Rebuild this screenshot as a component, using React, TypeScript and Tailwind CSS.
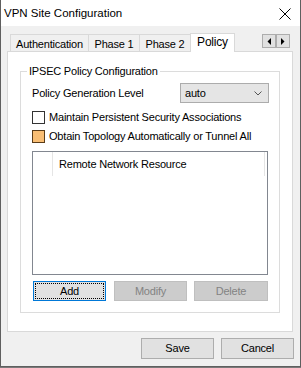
import React from "react";

const font = { fontFamily: '"Liberation Sans", Arial, sans-serif' };

function Tab({ label, selected, w, first }: { label: string; selected?: boolean; w: string; first?: boolean }) {
  if (selected) {
    return (
      <div className={`relative z-10 -mb-px -ml-px flex h-[19px] ${w} items-start justify-center border border-b-0 border-[#d9d9d9] bg-white pt-[1px] text-[12px] leading-[15px] tracking-[-0.2px] text-black`}>
        {label}
      </div>
    );
  }
  return (
    <div className={`${first ? "" : "-ml-px"} flex h-[17px] ${w} items-start justify-center border border-b-0 border-[#d9d9d9] bg-[#f0f0f0] pt-[2px] text-[11px] leading-[14px] text-black`}>
      {label}
    </div>
  );
}

function Arrow({ dir }: { dir: "l" | "r" }) {
  return (
    <div className="flex h-[14px] w-[14px] items-center justify-center border border-[#adadad] bg-[#e1e1e1]">
      <svg width="4" height="7" viewBox="0 0 4 7">
        {dir === "l" ? <polygon points="4,0 4,7 0.5,3.5" fill="#000" /> : <polygon points="0,0 0,7 3.5,3.5" fill="#000" />}
      </svg>
    </div>
  );
}

export default function App() {
  return (
    <div className="h-[368px] w-[301px] bg-[#7a7a7a]" style={font}>
      <div className="flex h-[367px] w-[301px] flex-col border-x border-b border-[#5f5f5f] bg-[#f0f0f0] text-[11px] tracking-[-0.2px] text-black">
        {/* Title bar */}
        <div className="flex h-[26px] shrink-0 items-center justify-between bg-white pl-[3px] pr-[9px] pt-[1px]">
          <span className="text-[11.5px] leading-none tracking-normal">VPN Site Configuration</span>
          <svg width="12" height="12" viewBox="0 0 12 12">
            <path d="M0.5 0.5 L11.5 11.5 M11.5 0.5 L0.5 11.5" stroke="#000" strokeWidth="1" />
          </svg>
        </div>

        {/* Tab strip */}
        <div className="mt-[7px] flex h-[18px] items-end pl-[9px] pr-[10px]">
          <Tab label="Authentication" w="w-[79px]" first />
          <Tab label="Phase 1" w="w-[52px]" />
          <Tab label="Phase 2" w="w-[52px]" />
          <Tab label="Policy" w="w-[45px]" selected />
          <div className="mb-[3px] ml-auto flex self-end">
            <Arrow dir="l" />
            <Arrow dir="r" />
          </div>
        </div>

        {/* Tab page */}
        <div className="ml-[6px] h-[281px] w-[286px] border border-[#d9d9d9] bg-white pl-[12px] pt-[19px]">
          {/* Group box */}
          <div className="relative h-[242px] w-[260px] border border-[#dcdcdc] pl-[11px] pr-[10px] pt-[11px]">
            <div className="absolute -top-[8px] left-[6px] bg-white px-[2px] text-[11px] leading-[14px]">
              IPSEC Policy Configuration
            </div>
            <div className="flex h-[20px] items-center justify-between">
              <span className="leading-none">Policy Generation Level</span>
              <div className="flex h-[20px] w-[89px] items-center justify-between border border-[#acacac] bg-[#e5e5e5] pl-[4px] pr-[6px]">
                <span className="leading-none">auto</span>
                <svg width="8" height="5" viewBox="0 0 8 5">
                  <path d="M0.5 0.5 L4 4 L7.5 0.5" stroke="#555" fill="none" strokeWidth="1" />
                </svg>
              </div>
            </div>
            <div className="mt-[8px] flex h-[13px] items-center gap-[4px]">
              <div className="h-[13px] w-[13px] border border-[#333] bg-white" />
              <span className="leading-none">Maintain Persistent Security Associations</span>
            </div>
            <div className="mt-[6px] flex h-[13px] items-center gap-[4px]">
              <div className="h-[13px] w-[13px] border border-[#5a3c18] bg-[#f9be74]" />
              <span className="leading-none">Obtain Topology Automatically or Tunnel All</span>
            </div>
            {/* List */}
            <div className="mt-[8px] h-[124px] w-[236px] border border-[#828790] bg-white">
              <div className="flex h-[24px]">
                <div className="w-[20px] border-r border-[#e5e5e5]" />
                <div className="flex flex-1 items-center border-r border-[#e5e5e5] pl-[6px] pr-0">
                  <span className="leading-none">Remote Network Resource</span>
                </div>
                <div className="w-[2px]" />
              </div>
            </div>
            {/* Buttons */}
            <div className="mt-[6px] flex h-[20px] pl-[1px]">
              <div className="flex h-[20px] w-[73px] items-center justify-center border border-[#0078d7] bg-[#e1e1e1] p-[1px]">
                <div className="flex h-full w-full items-center justify-center border border-dotted border-[#000]">
                  <span className="leading-none">Add</span>
                </div>
              </div>
              <div className="ml-[8px] flex h-[20px] w-[73px] items-center justify-center border border-[#bfbfbf] bg-[#cccccc] text-[#838383]">
                <span className="leading-none">Modify</span>
              </div>
              <div className="ml-[7px] flex h-[20px] w-[74px] items-center justify-center border border-[#bfbfbf] bg-[#cccccc] text-[#838383]">
                <span className="leading-none">Delete</span>
              </div>
            </div>
          </div>
        </div>

        {/* Footer */}
        <div className="mt-[6px] flex justify-end gap-[7px] pr-[6px]">
          <div className="flex h-[21px] w-[73px] items-center justify-center border border-[#adadad] bg-[#e1e1e1]">
            <span className="leading-none">Save</span>
          </div>
          <div className="flex h-[21px] w-[73px] items-center justify-center border border-[#adadad] bg-[#e1e1e1]">
            <span className="leading-none">Cancel</span>
          </div>
        </div>
      </div>
    </div>
  );
}
